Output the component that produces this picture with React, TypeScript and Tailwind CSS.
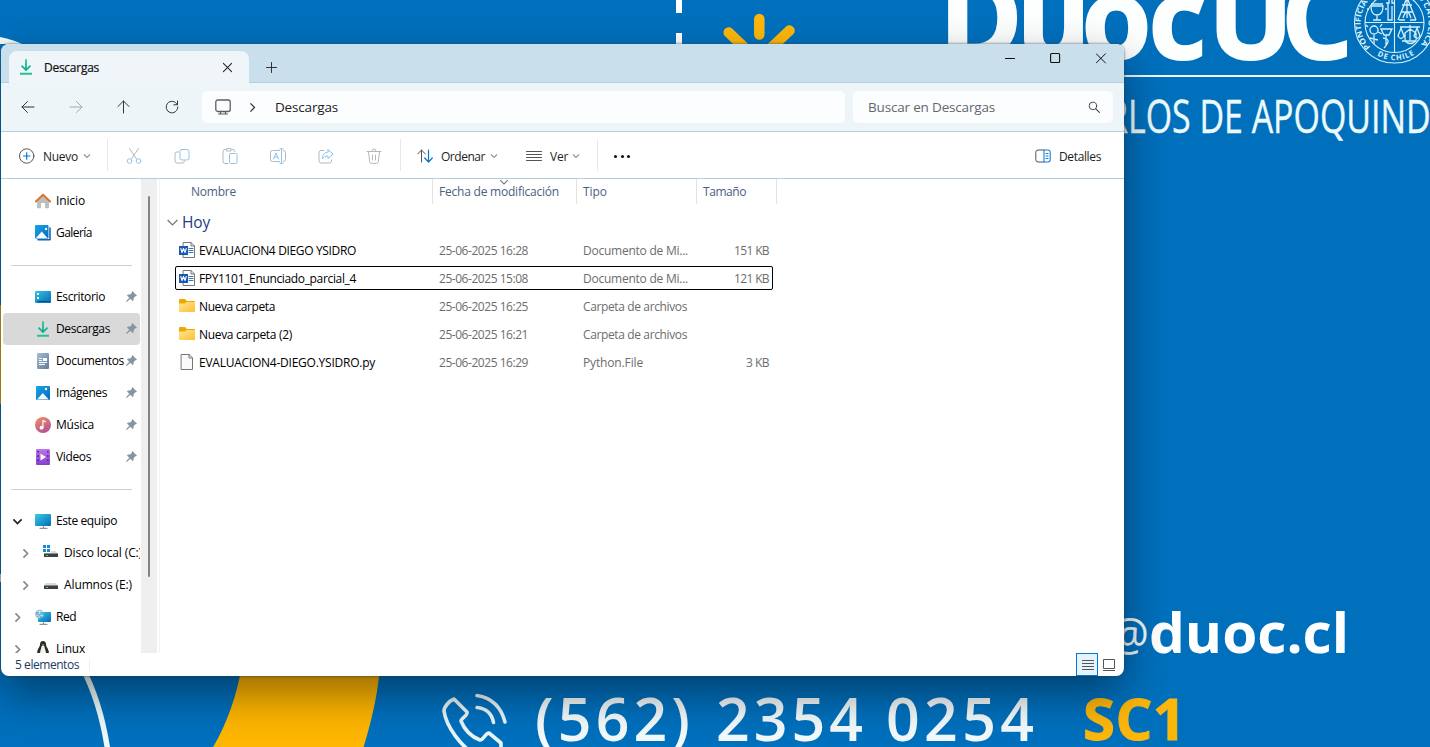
import { useLayoutEffect, useRef, useState, type ReactNode } from "react";

/* Text tracked so that it fills a given width. */
function Label({ w, className = "", children }: { w: number; className?: string; children: string }) {
  const ref = useRef<HTMLSpanElement>(null);
  const [spacing, setSpacing] = useState(0);
  useLayoutEffect(() => {
    if (ref.current) {
      const natural = ref.current.getBoundingClientRect().width;
      setSpacing((s) => s + (w - natural) / children.length);
    }
  }, [w, children]);
  return (
    <span ref={ref} className={`inline-block whitespace-pre ${className}`} style={{ letterSpacing: spacing }}>
      {children}
    </span>
  );
}

function Wallpaper() {
  return (
    <svg className="absolute inset-0" width="1430" height="747" viewBox="0 0 1430 747" fontFamily="'Open Sans', 'Noto Sans', sans-serif">
      <rect width="1430" height="747" fill="#0070bd" />
      <path d="M0 37Q14 40 22 44H0Z" fill="#f2fbfa" />
      <path d="M0 305h2v99H0z" fill="#ffb600" />
      <path d="M0 574h2v8H0z" fill="#fff" />
      <path d="M676 0h6v13h-6zM676 33h6v14h-6z" fill="#fff" />
      <g stroke="#fdb80b" strokeWidth="10.500" strokeLinecap="round">
        <path d="M759.3 19v15.500M728.700 32.500L748 51M789.500 30.500L770 49" />
      </g>
      <text x="939 1016.500 1081.500 1148.500 1200 1208 1281" y="59" fontSize="113" fontWeight="700" fill="#fdfefe" stroke="#fdfefe" strokeWidth="2">Duoc UC</text>
      <path d="M1110 75h320v2h-320z" fill="#edf9fb" />
      <text x="1107" y="133" fontSize="45" fill="#edfafb" stroke="#edfafb" strokeWidth=".4" textLength="350" lengthAdjust="spacingAndGlyphs">RLOS DE APOQUINDO</text>
      <g fill="none" stroke="#d5f1f8" strokeWidth="1.100">
        <circle cx="1394.500" cy="23" r="40" />
        <circle cx="1394.500" cy="23" r="29.500" />
        <path d="M1394.500 -7V52M1365 22.500h59" />
        <g strokeWidth="1.300">
          <path d="M1371 6q0 9 6 9t6-9zM1377 15v5M1373 20h8M1371 4h12M1369 9h-2M1385 9h2M1386 3h3V-4h3V3h3M1388 3V20h4V6" />
          <path d="M1406 0l-8 20M1408 0l8 20M1401 12h12M1403 18q4-12 8 0M1407 0v18M1399 20h6M1410 20h6M1402 5h10" />
          <circle cx="1374" cy="30" r="4" />
          <path d="M1374 35v9M1370 38l8 2M1368 27l-2-2M1380 27l2-3M1378 32l4 2M1381 29h11l-3 6h-5zM1386 35v11M1383 38q6 1 5 4t-4 6" />
          <path d="M1400 27h20M1410 25v15M1398 36q3 5 6 0l-3-8zM1414 36q3 5 6 0l-3-8zM1402 41h14M1410 29l6 4v8q-6 5-11 0v-8z" />
        </g>
      </g>
      <path id="sealTop" d="M1370.500 47A34 34 0 1 1 1418.500 47" fill="none" transform="rotate(0)" />
      <path id="sealBottom" d="M1370.500 51A37.400 37.400 0 0 0 1421 49.500" fill="none" />
      <g fill="#d5f1f8" fontSize="7.500" fontWeight="700" fontFamily="'Open Sans', sans-serif">
        <text><textPath href="#sealTop" textLength="156" lengthAdjust="spacingAndGlyphs">PONTIFICIA UNIVERSIDAD CATOLICA</textPath></text>
        <text><textPath href="#sealBottom" startOffset="8" textLength="39">DE CHILE</textPath></text>
      </g>
      <text x="1109" y="651" fontSize="46" fontWeight="500" fill="#eef8fa" textLength="40" lengthAdjust="spacingAndGlyphs">@</text>
      <text x="1149" y="653" fontSize="56" fontWeight="700" fill="#fff" textLength="200" lengthAdjust="spacingAndGlyphs">duoc.cl</text>
      <g fontSize="59" fontWeight="600" fill="#f3fafb">
        <text x="535" y="741" textLength="155">(562)</text>
        <text x="716" y="741" textLength="147">2354</text>
        <text x="886" y="741" textLength="148">0254</text>
      </g>
      <text x="1083" y="739.500" fontSize="58" fontWeight="700" fill="#fdb70b" stroke="#fdb70b" strokeWidth="1" textLength="103">SC1</text>
      <path d="M82 667Q101 703 108 752" fill="none" stroke="#edfaf8" strokeWidth="5.500" />
      <path d="M242 665Q234 712 212 749L363 749Q378 700 380 665Z" fill="#ffb600" />
      <g fill="none" stroke="#e9f5f7" strokeWidth="3.600" strokeLinejoin="round" strokeLinecap="round">
        <path d="M476 755C461 747 446 726 444 711C444 707 449 701 454 699L467 712C468 716 461 718 461 721C465 731 472 737 480 740C484 740 485 733 489 733L501 743V750" />
        <path d="M477 695.500Q499 699 505 722M477 707.500Q491 709 493.500 722.500" />
      </g>
    </svg>
  );
}

function Icon({ size = 16, className = "", color = "#333", children }: { size?: number; className?: string; color?: string; children: ReactNode }) {
  return (
    <svg className={`shrink-0 ${className}`} width={size} height={size} viewBox="0 0 16 16" fill="none" stroke={color} strokeWidth="1" strokeLinecap="round" strokeLinejoin="round">
      {children}
    </svg>
  );
}

function Chevron({ dir = "down", color = "#929292", size = 8, width = 1.1 }: { dir?: "down" | "right"; color?: string; size?: number; width?: number }) {
  return (
    <svg className="shrink-0" width={size} height={size} viewBox="0 0 8 8" fill="none" stroke={color} strokeWidth={width}>
      <path d={dir === "down" ? "M1 2.500L4 5.500L7 2.500" : "M2.500 1L5.500 4L2.500 7"} />
    </svg>
  );
}

function DownloadIcon() {
  return (
    <Icon color="none">
      <defs>
        <linearGradient id="dl" x1="0" y1="0" x2="0" y2="1">
          <stop offset="0" stopColor="#2cc98b" />
          <stop offset="1" stopColor="#0aa69a" />
        </linearGradient>
      </defs>
      <path d="M7.100 .3h1.800v8.700l3-3 1.200 1.200-5.100 5.100-5.100-5.100L4.100 6l3 3z" fill="url(#dl)" />
      <path d="M2 13.800h12v1.900H2z" fill="#25c192" />
    </Icon>
  );
}

function HomeIcon() {
  return (
    <Icon color="none">
      <path d="M2 6.500L8 2l6 4.500V14.500a.8.800 0 0 1-.8.800H10V10H6v5.300H2.800a.8.800 0 0 1-.8-.8z" fill="#bdbfc1" />
      <path d="M.9 8.500L8 1.700l7.100 6.800" stroke="#df7526" strokeWidth="2" />
    </Icon>
  );
}

function PhotoIcon({ stacked = false }: { stacked?: boolean }) {
  return (
    <Icon color="none">
      <defs>
        <linearGradient id="photo" x1="0" y1="0" x2="1" y2="1">
          <stop stopColor="#1aa5ea" /><stop offset="1" stopColor="#0868bd" />
        </linearGradient>
      </defs>
      {stacked && <path d="M3 14.800h12V3" stroke="#1267b4" strokeWidth="1.600" />}
      <rect x={stacked ? 0 : 1} y={stacked ? 0 : 1} width={stacked ? 13.500 : 14} height={stacked ? 13.500 : 14} rx="1" fill="url(#photo)" />
      <path d={stacked ? "M1 13L6.700 6.500l5.800 6.500z" : "M2 14.500L7.800 8l6 6.500z"} fill="#f5fbff" />
      <circle cx="11" cy="4" r="1.200" fill="#fff" />
    </Icon>
  );
}

function DesktopIcon() {
  return (
    <Icon color="none">
      <defs><linearGradient id="desk" x1="0" y1="0" x2="1" y2="1"><stop stopColor="#31c6e5" /><stop offset="1" stopColor="#0868b5" /></linearGradient></defs>
      <rect x="0" y="2" width="16" height="12" rx="1" fill="url(#desk)" />
      <path d="M2 4h2v2H2zM2 8h2v2H2z" fill="#fff" />
      <path d="M3 12.500h9M14 12.500h1" stroke="#064678" />
    </Icon>
  );
}

function DocumentsIcon() {
  return (
    <Icon color="none">
      <defs><linearGradient id="docs" x1="0" y1="0" x2="1" y2="1"><stop stopColor="#a7bcd2" /><stop offset="1" stopColor="#607b99" /></linearGradient></defs>
      <rect x="2" y="0" width="12" height="16" rx="1" fill="url(#docs)" />
      <path d="M4 5.500h3M4 7.500h3M4 9.500h8M4 11.500h6" stroke="#fff" strokeLinecap="butt" />
      <path d="M8 5h4v3H8z" fill="#fff" />
    </Icon>
  );
}

function MusicIcon() {
  return (
    <Icon color="none">
      <defs><linearGradient id="music" x1="0" y1="0" x2=".5" y2="1"><stop stopColor="#ef925f" /><stop offset="1" stopColor="#ba5392" /></linearGradient></defs>
      <circle cx="8" cy="8" r="8" fill="url(#music)" />
      <circle cx="6.500" cy="10.700" r="1.900" fill="#fff" />
      <path d="M7.900 10.700V3.500l2.600 1.300" stroke="#fff" strokeWidth="1.200" />
    </Icon>
  );
}

function VideoIcon() {
  return (
    <Icon color="none">
      <defs><linearGradient id="video" x1="0" y1="0" x2="0" y2="1"><stop stopColor="#b878ea" /><stop offset="1" stopColor="#873dcc" /></linearGradient></defs>
      <rect x="1" y="0" width="14" height="16" rx="1" fill="url(#video)" />
      <path d="M3.200 2v12M12.800 2v12" stroke="#4b2474" strokeWidth="1.500" strokeDasharray="1.500 2.700" strokeLinecap="butt" />
      <path d="M5.500 4.500l5.500 3.500-5.500 3.500z" fill="#fff" />
    </Icon>
  );
}

function MonitorIcon({ globe = false }: { globe?: boolean }) {
  return (
    <Icon color="none">
      <defs><linearGradient id="mon" x1="0" y1="0" x2="1" y2="1"><stop stopColor="#35cfdf" /><stop offset="1" stopColor="#0867bd" /></linearGradient></defs>
      <rect x={globe ? 3 : 0} y={globe ? 3 : 1} width={globe ? 13 : 16} height={globe ? 10 : 12} rx=".8" fill="url(#mon)" />
      <path d="M8.500 13.500v1.500M5 15.300h7" stroke="#89949e" strokeWidth="1.200" />
      {globe && (
        <>
          <circle cx="4.500" cy="5" r="4.300" fill="#74b1cf" />
          <path d="M2 2q3 2 6 0M1 6q4 0 3 3M5 1q-3 5 3 6" stroke="#d5f2f8" strokeWidth=".9" />
        </>
      )}
    </Icon>
  );
}

function DriveIcon({ system = false }: { system?: boolean }) {
  return (
    <Icon color="none">
      <path d="M3 6h10l2 3H1z" fill="#d9dbdd" />
      <path d="M1 8.500h14V12H1z" fill="#3d3f42" />
      <path d="M3.500 10.500h1" stroke="#5cdd72" />
      {system && (
        <>
          <path d="M-1-1h9v9h-9z" fill="#fff" />
          <path d="M0 0h3v3H0zM4 0h3v3H4zM0 4h3v3H0zM4 4h3v3H4z" fill="#1688d5" />
        </>
      )}
    </Icon>
  );
}

function PenguinIcon() {
  return (
    <Icon color="none">
      <path d="M8 0c2 0 3 1.500 3 3.500 0 2 1.500 3 2.500 6 .7 2.500.5 4.500-.5 5.500H3C2 14 2 12 2.500 9.500 3.500 6.500 5 5.500 5 3.500 5 1.500 6 0 8 0z" fill="#2a2b2c" />
      <path d="M6.600 5h2.800c0 3 2.600 6 1.300 10H5.500C4 11 6.500 8 6.600 5z" fill="#f2f2ef" />
      <path d="M6.500 3.500h3L8 5.200zM2 14l3-1 2 2.500H2zM14 14l-3-1-2 2.500h5z" fill="#e8af20" />
    </Icon>
  );
}

function PinIcon() {
  return (
    <svg width="11" height="11" viewBox="0 0 11 11" className="mb-px shrink-0" fill="#87949d">
      <path d="M6.300 0L11 4.700 10 5.300 9.300 5.200 7.700 7l-.1 2.200-.9.900L4.300 7.800.8 11 0 10.300 3.300 6.800 1 4.400l.9-.9 2.200-.1L5.900 1.700 5.700.900z" />
    </svg>
  );
}

function WordIcon() {
  return (
    <Icon color="none">
      <path d="M4.500.5h7.500l3.500 3.500v11.500h-11z" fill="#fff" stroke="#777" />
      <path d="M12 .5v3.500h3.500" stroke="#777" />
      <path d="M10 6.500h4M10 8.500h4M10 10.500h4" stroke="#2c78c9" />
      <rect x="0" y="4" width="9" height="9" fill="#1859b6" />
      <path d="M1.800 6.500l1.200 4 1.500-4 1.500 4 1.200-4" stroke="#fff" strokeWidth="1.100" />
    </Icon>
  );
}

function FolderIcon() {
  return (
    <Icon color="none">
      <defs><linearGradient id="folder" x1="0" y1="0" x2="1" y2="1"><stop stopColor="#ffe59a" /><stop offset="1" stopColor="#fdc02f" /></linearGradient></defs>
      <path d="M0 2q0-1 1-1h5l2 2h7q1 0 1 1v2H0z" fill="#eda900" />
      <path d="M0 5.500h6l1.500-1.500H16v9.200q0 .8-.8.800H.8Q0 14 0 13.200z" fill="url(#folder)" />
    </Icon>
  );
}

function FileIcon() {
  return (
    <Icon color="#777">
      <path d="M2.500.5h7.700l3.300 3.300v11.700h-11z" fill="#fafafa" />
      <path d="M10 .5v3.500h3.500" />
    </Icon>
  );
}

const quickAccess = [
  { name: "Escritorio", w: 49, icon: <DesktopIcon /> },
  { name: "Descargas", w: 54, icon: <DownloadIcon />, active: true },
  { name: "Documentos", w: 68, icon: <DocumentsIcon /> },
  { name: "Imágenes", w: 51, icon: <PhotoIcon /> },
  { name: "Música", w: 38, icon: <MusicIcon /> },
  { name: "Videos", w: 35, icon: <VideoIcon /> },
];

function SideRow({ icon, name, w, indent = false, chevron, pinned, active }: { icon: ReactNode; name: string; w: number; indent?: boolean; chevron?: "down" | "right"; pinned?: boolean; active?: boolean }) {
  return (
    <div className={`ml-0.5 flex h-8 w-[137px] shrink-0 items-center overflow-hidden rounded-sm ${indent ? "pl-[16px]" : "pl-[8px]"} ${active ? "bg-[#d9d9d9]" : ""}`}>
      <span className="flex w-[12px] shrink-0 justify-center">
        {chevron && <Chevron dir={chevron} size={11} width={1.2} color={chevron === "down" ? "#222" : "#888"} />}
      </span>
      <span className="ml-3 flex shrink-0">{icon}</span>
      <Label w={w} className="ml-[5px] shrink-0 text-black">{name}</Label>
      {pinned && <span className="ml-auto flex pr-[3px]"><PinIcon /></span>}
    </div>
  );
}

function Sidebar() {
  return (
    <div className="flex w-[159px] shrink-0 overflow-hidden border-r border-[#f3f3f3]">
      <div className="flex w-[140px] flex-col pt-1.5">
        <SideRow icon={<HomeIcon />} name="Inicio" w={29} />
        <SideRow icon={<PhotoIcon stacked />} name="Galería" w={36} />
        <div className="flex h-8 shrink-0 items-center pl-2.5"><div className="h-px w-[121px] bg-[#cfcfcf]" /></div>
        {quickAccess.map((q) => <SideRow key={q.name} {...q} pinned />)}
        <div className="flex h-8 shrink-0 items-center pl-2.5"><div className="h-px w-[121px] bg-[#cfcfcf]" /></div>
        <SideRow icon={<MonitorIcon />} name="Este equipo" w={61} chevron="down" />
        <SideRow icon={<DriveIcon system />} name="Disco local (C:)" w={78} chevron="right" indent />
        <SideRow icon={<DriveIcon />} name="Alumnos (E:)" w={68} chevron="right" indent />
        <SideRow icon={<MonitorIcon globe />} name="Red" w={20} chevron="right" />
        <SideRow icon={<PenguinIcon />} name="Linux" w={29} chevron="right" />
      </div>
      <div className="w-4 bg-[#efefef] pt-[17px] pl-[7px]"><div className="h-[381px] w-0.5 rounded-full bg-[#858585]" /></div>
    </div>
  );
}

const files = [
  { name: "EVALUACION4 DIEGO YSIDRO", w: 157, date: "25-06-2025 16:28", type: "Documento de Mi...", tw: 105, size: "151 KB", sw: 35, icon: <WordIcon /> },
  { name: "FPY1101_Enunciado_parcial_4", w: 157, date: "25-06-2025 15:08", type: "Documento de Mi...", tw: 105, size: "121 KB", sw: 35, icon: <WordIcon />, focused: true },
  { name: "Nueva carpeta", w: 76, date: "25-06-2025 16:25", type: "Carpeta de archivos", tw: 104, icon: <FolderIcon /> },
  { name: "Nueva carpeta (2)", w: 93, date: "25-06-2025 16:21", type: "Carpeta de archivos", tw: 104, icon: <FolderIcon /> },
  { name: "EVALUACION4-DIEGO.YSIDRO.py", w: 176, date: "25-06-2025 16:29", type: "Python.File", tw: 60, size: "3 KB", sw: 23, icon: <FileIcon /> },
];

function FileList() {
  return (
    <div className="flex flex-1 flex-col text-[#6d6d6d]">
      <div className="flex h-[25px] items-center text-[#4c607f]">
        <div className="flex h-full w-[273px] items-center border-r border-[#e2e2e2] pl-[31px]"><Label w={45}>Nombre</Label></div>
        <div className="relative flex h-full w-36 items-center border-r border-[#e2e2e2] pl-1.5">
          <span className="absolute top-[-2px] left-[66px]"><Chevron size={10} color="#777" width={0.9} /></span>
          <Label w={120}>Fecha de modificación</Label>
        </div>
        <div className="flex h-full w-[120px] items-center border-r border-[#e2e2e2] pl-1.5"><Label w={24}>Tipo</Label></div>
        <div className="flex h-full w-20 items-center border-r border-[#e2e2e2] pl-1.5"><Label w={43}>Tamaño</Label></div>
      </div>
      <div className="mt-1 flex h-[30px] items-center pb-0.5 pl-[6px]">
        <Chevron size={13} color="#777" width={0.8} />
        <Label w={28} className="ml-[3px] text-[15.5px] text-[#263a8c]">Hoy</Label>
      </div>
      <div className="flex flex-col gap-1 pl-[15px]">
        {files.map((f) => (
          <div key={f.name} className={`flex h-6 w-[598px] items-center rounded-[2px] border ${f.focused ? "border-black" : "border-transparent"}`}>
            <span className="ml-[3px] flex">{f.icon}</span>
            <div className="mt-0.5 ml-1 flex w-60"><Label w={f.w} className="text-black">{f.name}</Label></div>
            <div className="mt-0.5 w-36"><Label w={89}>{f.date}</Label></div>
            <div className="mt-0.5 w-[110px]"><Label w={f.tw}>{f.type}</Label></div>
            <div className="mt-0.5 flex flex-1 justify-end pr-[3px]">{f.size && <Label w={f.sw}>{f.size}</Label>}</div>
          </div>
        ))}
      </div>
    </div>
  );
}

function TitleBar() {
  return (
    <div className="flex h-[39px] items-end border-b border-[#b5cfe0] bg-[#c9dfeb]">
      <div className="mb-[-1px] ml-2 flex h-8 w-60 items-center rounded-t-lg bg-[#eff5f9] pl-[9px]">
        <DownloadIcon />
        <Label w={55} className="mt-px ml-2.5 text-[#111] [-webkit-text-stroke:0.2px_#111]">Descargas</Label>
        <Icon size={11} className="mr-4 ml-auto" color="#222"><path d="M2 2l12 12M14 2L2 14" strokeWidth="1.500" /></Icon>
      </div>
      <Icon size={11} className="mb-[9px] ml-[17px]" color="#333"><path d="M8 .7v14.600M.7 8h14.600" strokeWidth="1.500" /></Icon>
      <div className="mr-[17px] mb-[18px] ml-auto flex items-center gap-[35px]">
        <svg width="11" height="12" viewBox="0 0 11 12"><path d="M1 6.500h10" stroke="#111" /></svg>
        <svg width="11" height="12" viewBox="0 0 11 12"><rect x=".6" y="1.500" width="9" height="9" rx="1" fill="none" stroke="#111" strokeWidth="1.100" /></svg>
        <svg width="11" height="12" viewBox="0 0 11 12"><path d="M0 1.500l9.700 9.700M9.700 1.500l-9.700 9.700" stroke="#111" /></svg>
      </div>
    </div>
  );
}

function NavBar() {
  return (
    <div className="flex h-[49px] items-center border-b border-[#b3cfdc] bg-[#eef5f9]">
      <div className="flex w-[201px] shrink-0 gap-8 pl-[19px]">
        <Icon><path d="M2 8h12M7.500 2.500L2 8l5.500 5.500" /></Icon>
        <Icon color="#a5aaad"><path d="M2 8h12M8.500 2.500L14 8l-5.500 5.500" /></Icon>
        <Icon><path d="M7.500 14V2M2 7.500L7.500 2l5.500 5.500" /></Icon>
        <Icon><path d="M13.200 5.500A5.800 5.800 0 1 0 13.800 8M13.500 2v3.800H9.800" /></Icon>
      </div>
      <div className="flex h-8 w-[643px] items-center rounded-[5px] bg-[#fbfdff] pl-[13px]">
        <Icon color="#5c5f61" className="mb-px"><rect x=".8" y="1" width="14.400" height="11.500" rx="2" strokeWidth="1.300" /><path d="M5.500 13v2M10.500 13v2M3.500 15h9" strokeWidth="1.200" /></Icon>
        <span className="ml-4 flex"><Chevron dir="right" size={11} color="#333" width={0.9} /></span>
        <Label w={63} className="ml-[17px] text-[13.5px] text-[#222]">Descargas</Label>
      </div>
      <div className="ml-2 flex h-8 w-[260px] items-center rounded-[5px] bg-[#fbfdff] pl-[15px]">
        <Label w={127} className="text-[13.5px] text-[#65686b]">Buscar en Descargas</Label>
        <Icon size={12} color="#444" className="mr-[13px] ml-auto"><circle cx="6.500" cy="6.500" r="5" strokeWidth="1.300" /><path d="M10.200 10.200l5 5" strokeWidth="1.400" /></Icon>
      </div>
    </div>
  );
}

function Toolbar() {
  const gray = "#b5b7b9";
  const blue = "#8fc3ee";
  return (
    <div className="flex h-[47px] items-center border-b border-[#b3cfdc] text-[#1d1d1d]">
      <div className="flex h-8 w-[107px] items-center border-r border-[#e8e8e8] pt-0.5 pl-[18px]">
        <Icon color="#555" className="mb-px"><circle cx="7.700" cy="8" r="7.200" /><path d="M7.700 4.800v6.400M4.500 8h6.400" stroke="#0b74cb" strokeWidth="1.200" /></Icon>
        <Label w={35} className="mt-px ml-2">Nuevo</Label>
        <span className="ml-[5px] flex"><Chevron /></span>
      </div>
      <div className="flex w-[292px] shrink-0 gap-8 pt-0.5 pl-[18px]">
        <Icon color={gray}><path d="M3.500.5l7 10.500M12.500.5l-7 10.500" /><circle cx="3.500" cy="13" r="2.300" stroke={blue} /><circle cx="12.500" cy="13" r="2.300" stroke={blue} /></Icon>
        <Icon color={gray}><path d="M4.500 4H3a2 2 0 0 0-2 2v7a2 2 0 0 0 2 2h5.500a2 2 0 0 0 2-2" /><rect x="6" y="1.500" width="9" height="10.500" rx="2" stroke={blue} /></Icon>
        <Icon color={gray}><path d="M6 15.500H3a2 2 0 0 1-2-2V3.500a2 2 0 0 1 2-2h1M10 1.500h1a2 2 0 0 1 2 2M5 .5h4v2.500H5z" /><rect x="7.500" y="5.500" width="7.500" height="10" rx="1.200" stroke={blue} /></Icon>
        <Icon color={gray}><path d="M9.500 2.500h-7a2 2 0 0 0-2 2v7a2 2 0 0 0 2 2h7M13.500 2.500a2 2 0 0 1 2 2v7a2 2 0 0 1-2 2" /><path d="M3.500 11L6 5l2.500 6M4.300 9h3.400M11.500.8v14.500M9.800.8h3.400M9.800 15.300h3.400" stroke={blue} /></Icon>
        <Icon color={gray}><path d="M6 2.500H3a2 2 0 0 0-2 2v8.500a2 2 0 0 0 2 2h8.500a2 2 0 0 0 2-2v-1" /><path d="M10 1.500l5 4.500-5 4.500V8c-3 0-4.500 1-5.700 3C4.300 7 6.500 4.200 10 4z" stroke={blue} /></Icon>
        <Icon color={gray}><path d="M1 3.500h14M6 3.300q0-2.300 2-2.300t2 2.300M2.500 3.500l1.200 10.300q.2 1.500 1.600 1.500h5.400q1.400 0 1.600-1.500l1.200-10.300M6.500 7v5M9.500 7v5" /></Icon>
      </div>
      <div className="flex h-8 w-[198px] items-center border-r border-l border-[#e8e8e8] pt-0.5 pl-4">
        <Icon color="#555"><path d="M4.500 14V2M.7 6L4.500 2l3.800 4" /><path d="M11.500 2v12M7.700 10l3.800 4 3.800-4" stroke="#0b74cb" strokeWidth="1.200" /></Icon>
        <Label w={44} className="mt-px ml-2">Ordenar</Label>
        <span className="ml-[5px] flex"><Chevron /></span>
        <Icon color="#555" className="ml-7"><path d="M.5 3.500h15M.5 6.500h15M.5 9.500h15M.5 12.500h15" /></Icon>
        <Label w={18} className="mt-px ml-2">Ver</Label>
        <span className="ml-1 flex"><Chevron /></span>
      </div>
      <div className="mt-0.5 ml-4 flex gap-[3.5px]">
        <i className="size-[3px] rounded-full bg-[#111]" /><i className="size-[3px] rounded-full bg-[#111]" /><i className="size-[3px] rounded-full bg-[#111]" />
      </div>
      <div className="mr-[23px] ml-auto flex items-center pt-0.5">
        <Icon color="#555"><path d="M9 2H3a2.200 2.200 0 0 0-2.200 2.200v7.600A2.200 2.200 0 0 0 3 14h6" /><path d="M9 2h4a2.200 2.200 0 0 1 2.200 2.200v7.600A2.200 2.200 0 0 1 13 14H9zM11 5.500h2M11 8h2M11 10.500h2" stroke="#1680dc" strokeWidth="1.100" /></Icon>
        <Label w={42} className="mt-px ml-2">Detalles</Label>
      </div>
    </div>
  );
}

export default function App() {
  return (
    <div className="relative h-[747px] w-[1430px] overflow-hidden bg-[#0070bd] font-['Open_Sans','Noto_Sans',sans-serif] text-[12px] leading-4">
      <Wallpaper />
      <div className="absolute top-11 left-px z-10 h-[632px] w-[1123px] rounded-lg [box-shadow:0_18px_44px_rgba(0,0,0,0.42),0_0_2px_1px_rgba(50,80,100,0.4)]">
        <div className="flex h-full flex-col overflow-hidden rounded-lg bg-white">
          <TitleBar />
          <NavBar />
          <Toolbar />
          <div className="flex h-[474px] overflow-hidden">
            <Sidebar />
            <FileList />
          </div>
          <div className="flex h-[23px] items-center pl-3.5 text-[#23395f]">
            <div className="flex h-3 w-[75px] items-center border-r border-[#eee]"><Label w={64}>5 elementos</Label></div>
            <div className="mr-[9px] ml-auto flex items-center">
              <span className="flex h-[23px] w-[22px] items-center justify-center border border-[#0078d4] bg-[#e5f3fb]">
                <svg width="12" height="12" viewBox="0 0 12 12" className="mt-[3px] ml-px"><path d="M0 .5h12M0 3.500h12M0 6.500h12M0 9.500h12" stroke="#555" /></svg>
              </span>
              <svg width="12" height="12" viewBox="0 0 12 12" className="ml-[5px]"><path d="M.5.5h11v9H.5zM0 11.500h12" fill="none" stroke="#555" /></svg>
            </div>
          </div>
        </div>
      </div>
    </div>
  );
}
